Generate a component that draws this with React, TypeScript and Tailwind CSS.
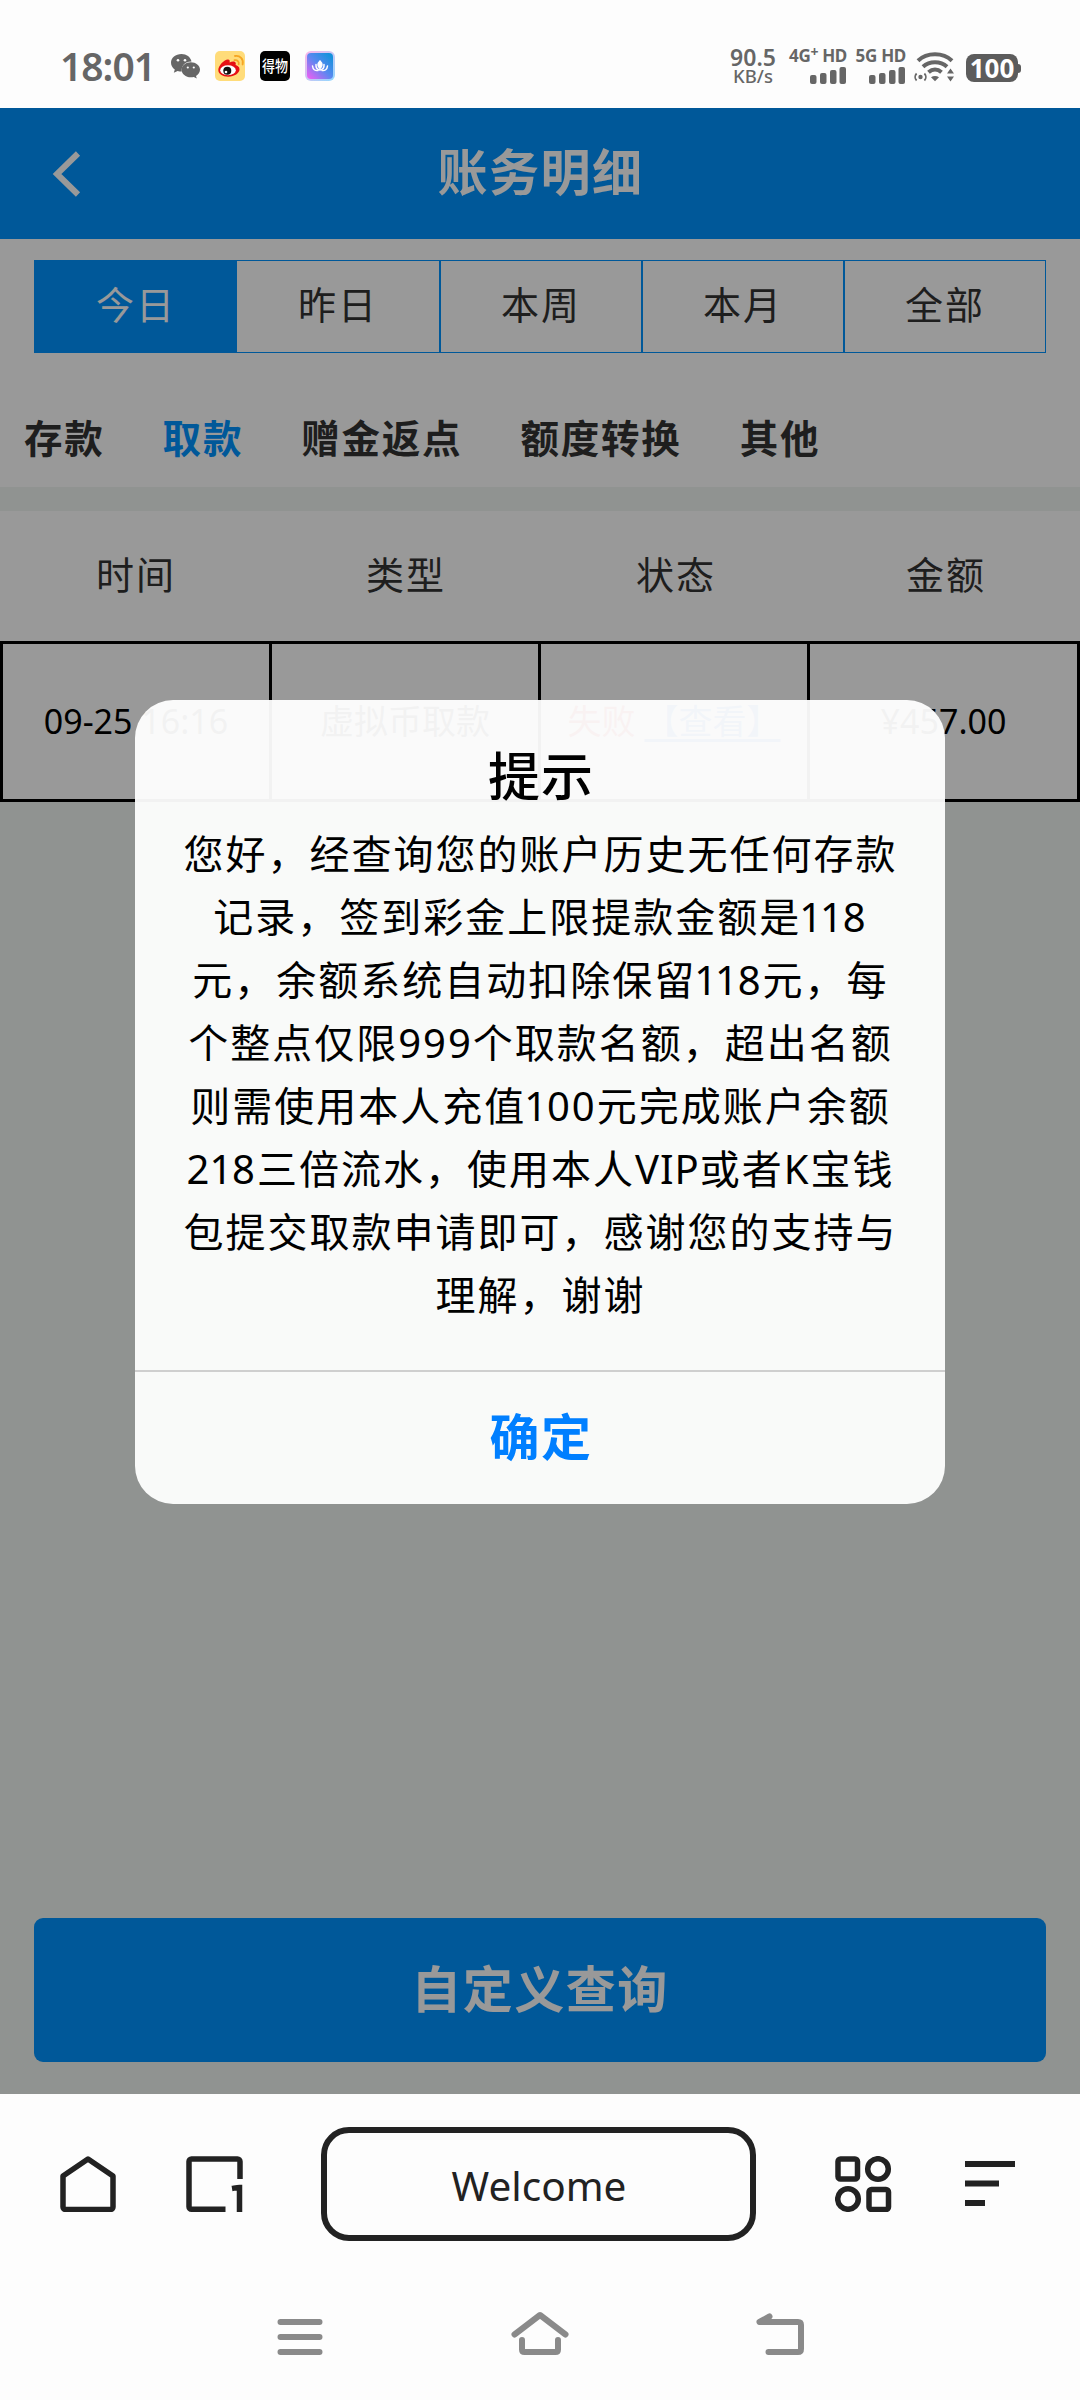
const periods = ['今日', '昨日', '本周', '本月', '全部'];
const categories = ['存款', '取款', '赠金返点', '额度转换', '其他'];
const columns = ['时间', '类型', '状态', '金额'];
const messageLines = [
    '您好，经查询您的账户历史无任何存款',
    '记录，签到彩金上限提款金额是118',
    '元，余额系统自动扣除保留118元，每',
    '个整点仅限999个取款名额，超出名额',
    '则需使用本人充值100元完成账户余额',
    '218三倍流水，使用本人VIP或者K宝钱',
    '包提交取款申请即可，感谢您的支持与',
    '理解，谢谢',
];

const WechatIcon = () => (
    <svg width="29" height="25" viewBox="0 0 29 25" fill="#666">
        <path d="M10.500 0C4.600 0 0 3.900 0 8.800c0 2.800 1.500 5.200 3.800 6.800l-1 3.200 3.800-1.900c1.300.4 2.600.6 4.100.6C10 12 14 7.200 20.500 7.400 19.500 3 15.500 0 10.500 0z" />
        <path d="M19.800 8.200c-5.100 0-9.200 3.300-9.200 7.500s4.100 7.600 9.200 7.600c1.100 0 2.100-.2 3-.4l3 1.700-.8-2.700c2.300-1.400 4-3.600 4-6.200 0-4.200-4.100-7.500-9.200-7.500z" />
        <g fill="#fdfdfd">
            <circle cx="7" cy="6.200" r="1.300" />
            <circle cx="14" cy="6.200" r="1.300" />
            <circle cx="16.800" cy="13.500" r="1.100" />
            <circle cx="22.800" cy="13.500" r="1.100" />
        </g>
    </svg>
);

const WeiboIcon = () => (
    <svg width="30" height="30" viewBox="0 0 30 30">
        <rect width="30" height="30" rx="5" fill="#ffdc7a" />
        <path d="M13 8.500c1.600 0 2 1.200 1.600 2.900 2.500-1.200 6-1.400 6.200.8.100.8-.2 1.400-.3 1.900 2 .6 4 1.800 4 4.200 0 4-5 7.400-11.300 7.400-5.700 0-9.900-2.800-9.900-6.700C3.300 14.500 9.500 8.300 13 8.500z" fill="#e60f14" />
        <ellipse cx="13" cy="19.300" rx="7.800" ry="5" fill="#fff" />
        <circle cx="12.300" cy="19.800" r="4" fill="#111" />
        <circle cx="11" cy="21" r="1.300" fill="#fff" />
        <path d="M19.500 9.200c2.800-.6 4.800 1.500 4.200 4.200M20 5c4.800-1 9 3.200 7.600 8.500" fill="none" stroke="#f5a623" strokeWidth="1.800" strokeLinecap="round" />
    </svg>
);

const LotusIcon = () => (
    <svg width="30" height="30" viewBox="0 0 30 30">
        <defs>
            <linearGradient id="lotus" x1="1" y1="0" x2="0" y2="1">
                <stop offset="0.100" stopColor="#1592dc" />
                <stop offset="0.500" stopColor="#5a88f0" />
                <stop offset="1" stopColor="#f65cf4" />
            </linearGradient>
            <linearGradient id="lotusEdge" x1="1" y1="1" x2="0" y2="0">
                <stop offset="0" stopColor="#8fd8ff" />
                <stop offset="1" stopColor="#ffb5ea" />
            </linearGradient>
        </defs>
        <rect width="30" height="30" rx="6" fill="url(#lotusEdge)" />
        <rect x="2" y="2" width="26" height="26" rx="4" fill="url(#lotus)" />
        <g fill="none" stroke="#fff" strokeWidth="1.500" strokeLinecap="round">
            <path d="M15 10c-2.500 2.500-2.500 5 0 7.500 2.500-2.500 2.500-5 0-7.500z" fill="#fff" />
            <path d="M11 13.500c-.3 3 1 5 4 5.500 3-.5 4.300-2.500 4-5.500" />
            <path d="M7.500 15c.5 3.500 2.500 5 5.500 4.500M22.500 15c-.5 3.500-2.500 5-5.500 4.500" />
        </g>
    </svg>
);

const SignalBars = () => (
    <svg width="37" height="17" viewBox="0 0 37 17" fill="#666">
        <rect x="0" y="8" width="6.500" height="9" rx="2" />
        <rect x="10" y="6" width="6.500" height="11" rx="2" />
        <rect x="20" y="3" width="6.500" height="14" rx="2" />
        <rect x="29.500" y="0" width="6.500" height="17" rx="2" />
    </svg>
);

const WifiIcon = () => (
    <svg width="40" height="30" viewBox="0 0 40 30" fill="none" stroke="#666">
        <path d="M4 8.800C13 .2 29 .2 38 8.800" strokeWidth="4" />
        <path d="M9 14.800c6.500-6 17.500-6 24 0" strokeWidth="4" />
        <path d="M14.500 20.200c4-3.500 9-3.500 13 0" strokeWidth="4" />
        <path d="M17 25.300c2.400-1.900 5.600-1.900 8 0l-4 4z" fill="#666" stroke="none" />
        <path d="M2.600 21.500a5 5 0 0 0 0 7M10.400 21.500a5 5 0 0 1 0 7" strokeWidth="1.800" />
        <circle cx="6.500" cy="25" r="2.200" fill="#666" stroke="none" />
        <path d="M36.500 16.500l3.500 5h-7zM36.500 29.500l3.500-5h-7z" fill="#666" stroke="none" />
    </svg>
);

const StatusBar = () => (
    <div className="flex h-[108px] items-start justify-between bg-[#fdfdfd] pl-[60px] pr-[59px] pt-[47px] text-[#666]">
        <div className="flex h-[38px] items-center">
            <span className="w-[111px] text-[39px] font-semibold leading-[38px] tracking-[-1px]">18:01</span>
            <WechatIcon />
            <div className="ml-[15px] flex gap-[15px]">
                <WeiboIcon />
                <div className="flex size-[30px] items-center justify-center rounded-[5px] bg-black text-[13px] font-medium leading-none text-white">
                    <span className="scale-y-125">得物</span>
                </div>
                <LotusIcon />
            </div>
        </div>
        <div className="flex h-[38px] font-semibold">
            <div className="flex w-[48px] flex-col items-center">
                <span className="text-[23px] leading-[20px]">90.5</span>
                <span className="text-[18.500px] font-medium leading-[18px]">KB/s</span>
            </div>
            <div className="ml-[12px] flex w-[58px] flex-col items-end">
                <span className="flex whitespace-nowrap text-[17px] font-bold leading-[18px] tracking-[-0.300px]">
                    4G<span className="mr-[4px] -mt-[4px] text-[14px]">+</span>HD
                </span>
                <div className="mt-[2px]">
                    <SignalBars />
                </div>
            </div>
            <div className="ml-[9px] flex w-[50px] flex-col items-end">
                <span className="whitespace-nowrap text-[17px] font-bold leading-[18px] tracking-[-0.300px]">5G HD</span>
                <div className="mt-[2px]">
                    <SignalBars />
                </div>
            </div>
            <div className="ml-[8px] mt-[5px]">
                <WifiIcon />
            </div>
            <div className="ml-[12px] mt-[7px] flex h-[28px] items-center">
                <div className="flex h-[28px] w-[52px] items-center justify-center rounded-[8px] bg-[#5c5c5c] text-[26px] font-bold leading-none text-white">100</div>
                <div className="h-[9px] w-[3px] rounded-r-[3px] bg-[#5c5c5c]" />
            </div>
        </div>
    </div>
);

const RecordTable = () => (
    <div className="bg-white">
        <div className="grid h-[130px] grid-cols-4 text-center text-[38px] leading-[126px] tracking-[2px] text-[#333]">
            {columns.map((name) => (
                <div key={name} className="pl-[2px]">{name}</div>
            ))}
        </div>
        <div className="grid h-[161px] grid-cols-[269px_269px_269px_1fr] border-[3px] border-black text-center text-[34px] leading-[154px] text-black">
            <div className="border-r-[3px] border-black">09-25 16:16</div>
            <div className="border-r-[3px] border-black">虚拟币取款</div>
            <div className="flex justify-center border-r-[3px] border-black">
                <span className="text-red-600">失败</span>
                <a className="ml-[9px] text-[#0066ee] underline decoration-[3px] underline-offset-[5px]">【查看】</a>
            </div>
            <div>¥457.00</div>
        </div>
    </div>
);

const Page = () => (
    <div className="flex h-full flex-col bg-[#f0f5f2]">
        <header className="flex h-[131px] items-center bg-[#0093ff] px-[51px] text-white">
            <svg width="30" height="46" viewBox="0 0 30 46" fill="none" stroke="#fff" strokeWidth="6">
                <path d="M27 2.500L6 23l21 20.500" />
            </svg>
            <h1 className="flex-1 pb-[3px] pr-[29px] text-center text-[50px] font-bold tracking-[1.500px]">账务明细</h1>
        </header>
        <div className="h-[248px] bg-white pt-[21px]">
            <div className="mx-[34px] grid h-[93px] grid-cols-5 border border-[#0093ff] text-center text-[38px] leading-[87px] tracking-[2px] text-[#333]">
                {periods.map((name, i) => (
                    <div key={name} className={i === 0 ? 'bg-[#0093ff] text-white' : i === 1 ? '' : 'border-l-2 border-[#0093ff]'}>
                        {name}
                    </div>
                ))}
            </div>
            <div className="flex h-[170px] gap-[58px] pl-[24px] text-[38.500px] font-bold leading-[170px] tracking-[1.800px] text-[#333]">
                {categories.map((name) => (
                    <div key={name} className={name === '取款' ? 'text-[#0093ff]' : ''}>
                        {name}
                    </div>
                ))}
            </div>
        </div>
        <div className="h-[24px]" />
        <RecordTable />
        <button className="mx-[34px] mb-[32px] mt-auto h-[144px] rounded-[9px] bg-[#0093ff] pb-[2px] text-[50px] font-bold tracking-[1.500px] text-white">
            自定义查询
        </button>
    </div>
);

// "1" sits tighter than the surrounding characters
const MessageLine = ({ text }: { text: string }) => (
    <p className="whitespace-nowrap pl-[1px]">
        {text.split(/(1|VIP)/).map((part, i) => {
            if (part === '1') return <span key={i} className="-ml-[2px] tracking-[-0.200px]">{part}</span>;
            if (part === 'VIP') return <span key={i} className="tracking-[1px]">{part}</span>;
            return part;
        })}
    </p>
);

const Dialog = () => (
    <div className="h-[804px] w-[810px] overflow-hidden rounded-[38px] bg-white/95 text-center text-black">
        <h2 className="mt-[39px] pl-[2px] text-[52px] font-medium leading-[73px] tracking-[1px]">提示</h2>
        <div className="mt-[10px] h-[548px] text-[40px] leading-[63px] tracking-[2px]">
            {messageLines.map((line) => (
                <MessageLine key={line} text={line} />
            ))}
        </div>
        <button className="h-[134px] w-full border-t-2 border-[#cfcfcf] pb-[2px] pl-[2px] text-[50px] font-bold tracking-[1.500px] text-[#007fff]">确定</button>
    </div>
);

const BrowserBar = () => (
    <div className="flex h-[180px] items-center pl-[60px] pr-[65px] text-[#222]">
        <svg width="56" height="56" viewBox="0 0 56 56" fill="none" stroke="#222" strokeWidth="5.500" strokeLinejoin="round">
            <path d="M28 3l25 17v31a2.500 2.500 0 0 1-2.500 2.500h-45A2.500 2.500 0 0 1 3 51V20z" />
        </svg>
        <svg className="ml-[70px]" width="57" height="56" viewBox="0 0 57 56" fill="none" stroke="#222" strokeWidth="5.500">
            <path d="M39.500 53.200H5.500A2.500 2.500 0 0 1 3 50.700V5.500A2.500 2.500 0 0 1 5.500 3h46A2.500 2.500 0 0 1 54 5.500V23" />
            <path d="M46 32.500c3-.5 5-1 7.500-1V56" />
        </svg>
        <div className="ml-[78px] h-[114px] w-[435px] rounded-[28px] border-[6px] border-[#222] pl-[1px] text-center font-['Noto_Sans'] text-[40.500px] leading-[105px]">
            Welcome
        </div>
        <svg className="ml-[79px]" width="57" height="56" viewBox="0 0 57 56" fill="none" stroke="#222" strokeWidth="5.500">
            <rect x="3" y="3" width="19.500" height="20" rx="2.500" />
            <circle cx="43" cy="13" r="10.300" />
            <circle cx="13" cy="43" r="10.300" />
            <rect x="34" y="33.500" width="19.500" height="20" rx="2.500" />
        </svg>
        <svg className="ml-auto" width="50" height="46" viewBox="0 0 50 46" fill="#222">
            <rect width="50" height="6" />
            <rect y="19.500" width="34" height="6" />
            <rect y="39" width="20" height="6" />
        </svg>
    </div>
);

const SystemNav = () => (
    <div className="flex items-start justify-between pl-[277px] pr-[275px] pt-[37px]">
        <svg width="46" height="46" viewBox="0 0 46 46" stroke="#8a8a8a" strokeWidth="6" strokeLinecap="round">
            <path d="M3.500 11h39M3.500 26h39M3.500 41h39" />
        </svg>
        <svg width="58" height="46" viewBox="0 0 58 46" fill="none" stroke="#8a8a8a" strokeWidth="6" strokeLinecap="round" strokeLinejoin="round">
            <path d="M3.500 23.500L29 4l25.500 19.500" />
            <path d="M11 29v9.500q0 2.500 2.500 2.500h31q2.500 0 2.500-2.500V29" />
        </svg>
        <svg width="49" height="46" viewBox="0 0 49 46" fill="none" stroke="#8a8a8a" strokeWidth="6" strokeLinecap="round" strokeLinejoin="round">
            <path d="M13.500 5.500L3.500 11h38.500q3 0 3 3v24q0 3-3 3H12.500" />
        </svg>
    </div>
);

const App = () => {
    return (
        <div className="flex h-[2400px] w-[1080px] flex-col overflow-hidden bg-[#fdfdfd] font-['Noto_Sans','Noto_Sans_CJK_SC',sans-serif]">
            <StatusBar />
            <main className="relative h-[1986px]">
                <Page />
                <div className="absolute inset-0 flex items-center justify-center bg-black/40 pt-[2px]">
                    <Dialog />
                </div>
            </main>
            <BrowserBar />
            <SystemNav />
        </div>
    );
};

export default App;
